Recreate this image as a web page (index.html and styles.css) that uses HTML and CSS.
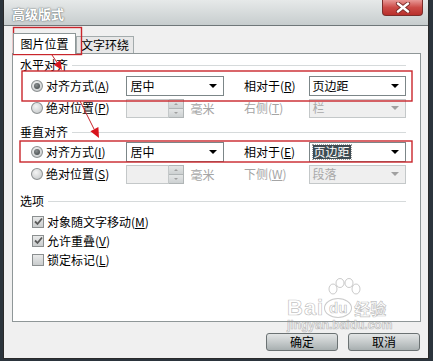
FILE: index.html
```html
<!DOCTYPE html>
<html lang="zh-CN">
<head>
    <meta charset="UTF-8">
    <title>高级版式</title>
    <link rel="stylesheet" href="styles.css">
</head>
<body>
    <div class="janela">
        <div class="barra">
            <span class="titulo">高级版式</span>
            <div class="fechar">
                <svg width="18" height="11" viewBox="0 0 18 11">
                    <path d="M4 1.5 L14 9.5 M14 1.5 L4 9.5" stroke="#7a2a28" stroke-width="4.2" stroke-linecap="round"/>
                    <path d="M4 1.5 L14 9.5 M14 1.5 L4 9.5" stroke="#fff" stroke-width="2.4" stroke-linecap="round"/>
                </svg>
            </div>
        </div>

        <div class="conteudo">
            <div class="abas">
                <div class="aba ativa">图片位置</div>
                <div class="aba">文字环绕</div>
            </div>

            <div class="painel">
                <div class="grupo">水平对齐</div>
                <div class="linha">
                    <span class="radio marcado"></span>
                    <span class="rotulo">对齐方式(<u>A</u>)</span>
                    <div class="caixa"><span>居中</span><i class="seta"></i></div>
                    <span class="rotulo2">相对于(<u>R</u>)</span>
                    <div class="caixa"><span>页边距</span><i class="seta"></i></div>
                </div>
                <div class="linha">
                    <span class="radio"></span>
                    <span class="rotulo">绝对位置(<u>P</u>)</span>
                    <div class="numero">
                        <span class="campo"></span>
                        <span class="giro"><i class="cima"></i><i class="baixo"></i></span>
                        <span class="unidade">毫米</span>
                    </div>
                    <span class="rotulo2 cinza">右侧(<u>T</u>)</span>
                    <div class="caixa off"><span>栏</span><i class="seta"></i></div>
                </div>

                <div class="grupo g2">垂直对齐</div>
                <div class="linha l3">
                    <span class="radio marcado"></span>
                    <span class="rotulo">对齐方式(<u>I</u>)</span>
                    <div class="caixa"><span>居中</span><i class="seta"></i></div>
                    <span class="rotulo2">相对于(<u>E</u>)</span>
                    <div class="caixa"><span class="selecionado">页边距</span><i class="seta"></i></div>
                </div>
                <div class="linha">
                    <span class="radio"></span>
                    <span class="rotulo">绝对位置(<u>S</u>)</span>
                    <div class="numero">
                        <span class="campo"></span>
                        <span class="giro"><i class="cima"></i><i class="baixo"></i></span>
                        <span class="unidade">毫米</span>
                    </div>
                    <span class="rotulo2 cinza">下侧(<u>W</u>)</span>
                    <div class="caixa off"><span>段落</span><i class="seta"></i></div>
                </div>

                <div class="grupo g3">选项</div>
                <div class="opcao primeira">
                    <span class="check"><svg width="9" height="9" viewBox="0 0 9 9"><path d="M1 4.5 L3.5 7 L8 1.5" fill="none" stroke="#5a5a5a" stroke-width="1.8"/></svg></span>
                    <span>对象随文字移动(<u>M</u>)</span>
                </div>
                <div class="opcao">
                    <span class="check"><svg width="9" height="9" viewBox="0 0 9 9"><path d="M1 4.5 L3.5 7 L8 1.5" fill="none" stroke="#5a5a5a" stroke-width="1.8"/></svg></span>
                    <span>允许重叠(<u>V</u>)</span>
                </div>
                <div class="opcao">
                    <span class="check"></span>
                    <span>锁定标记(<u>L</u>)</span>
                </div>
            </div>

            <div class="rodape">
                <button class="botao">确定</button>
                <button class="botao">取消</button>
            </div>
        </div>
    </div>

    <div class="marca">
        <svg class="pata" width="34" height="20" viewBox="0 0 34 20">
            <g fill="rgba(255,255,255,0.7)" stroke="rgba(150,150,150,0.5)">
                <ellipse cx="6" cy="11" rx="4" ry="5"/>
                <ellipse cx="13" cy="5" rx="4" ry="4.5"/>
                <ellipse cx="22" cy="5" rx="4" ry="4.5"/>
                <ellipse cx="29" cy="11" rx="4" ry="5"/>
            </g>
        </svg>
        <div class="marca-linha">
            <span class="bai">Bai</span><span class="du">du</span><span class="jy">经验</span>
        </div>
        <div class="url">jingyan.baidu.com</div>
    </div>

    <svg class="anotacao" width="433" height="361" viewBox="0 0 433 361">
        <g fill="none" stroke="#c9252b" stroke-width="1.4">
            <rect x="13.5" y="27.5" width="68" height="27"/>
            <rect x="22" y="71" width="390" height="30"/>
            <rect x="20" y="141" width="392" height="21"/>
            <line x1="52" y1="55" x2="58" y2="64" stroke-width="1"/>
            <line x1="80" y1="101" x2="94" y2="129" stroke-width="1"/>
        </g>
        <g fill="#d8141c">
            <polygon points="62,70 53.7,64.7 60.3,60.3"/>
            <polygon points="99,138 90.4,131.2 98.4,127"/>
        </g>
    </svg>
</body>
</html>
```

FILE: styles.css
```css
* {
    box-sizing: border-box;
}

body {
    margin: 0;
    width: 433px;
    height: 361px;
    overflow: hidden;
    position: relative;
    background-color: #2b343c;
    font-family: "Noto Sans CJK SC", "Liberation Sans", sans-serif;
    font-size: 12px;
    color: #000;
}

u {
    text-decoration: underline;
}

.janela {
    margin-left: 3px;
    width: 426px;
    height: 359px;
    background-color: #f0f0f0;
    border: 1px solid #2a2a2a;
    border-top: none;
}

.barra {
    display: flex;
    justify-content: space-between;
    height: 26px;
    background: linear-gradient(#e6e9e9, #c7cdce);
    border-bottom: 1px solid #6f7779;
}

.titulo {
    padding: 6px 0 0 8px;
    font-size: 13px;
    line-height: 16px;
    font-weight: bold;
    color: #fff;
    text-shadow: 0 0 2px #6c7475, 0 0 1px #6c7475;
}

.fechar {
    display: flex;
    justify-content: center;
    align-items: center;
    width: 41px;
    height: 16px;
    margin-right: 5px;
    background: linear-gradient(#e89896, #cc4b47 50%, #b8302c);
    border: 1px solid #7b2d2a;
    border-top: none;
    border-radius: 0 0 4px 4px;
}

.conteudo {
    padding: 7px 7px 0 8px;
}

.abas {
    display: flex;
    align-items: flex-end;
    height: 20px;
}

.aba {
    display: flex;
    justify-content: center;
    align-items: center;
    width: 58px;
    height: 17px;
    background-color: #e8e8e8;
    border: 1px solid #a3abac;
    border-bottom: none;
    line-height: 14px;
}

.aba.ativa {
    position: relative;
    z-index: 1;
    width: 63px;
    height: 21px;
    margin-left: 1px;
    margin-bottom: -1px;
    background-color: #fff;
    border-color: #8d9697;
}

.painel {
    height: 269px;
    padding: 4px 14px 0 7px;
    background-color: #fff;
    border: 1px solid #8f9798;
}

.grupo {
    display: flex;
    align-items: center;
    gap: 4px;
    height: 14px;
    line-height: 14px;
}

.grupo::after {
    content: "";
    flex: 1;
    border-top: 1px solid #d6dadb;
}

.g2 {
    margin-top: 7px;
}

.g3 {
    margin-top: 10px;
}

.linha {
    display: flex;
    align-items: center;
    height: 20px;
    margin-top: 2px;
    padding-left: 11px;
}

.grupo + .linha {
    margin-top: 4px;
}

.grupo + .l3 {
    margin-top: 3px;
}

.radio {
    width: 12px;
    height: 12px;
    border-radius: 50%;
    border: 1px solid #8d9192;
    background: radial-gradient(circle at 40% 35%, #f4f4f4, #bfc3c4);
    display: flex;
    justify-content: center;
    align-items: center;
}

.radio.marcado::after {
    content: "";
    width: 6px;
    height: 6px;
    border-radius: 50%;
    background: radial-gradient(circle at 40% 35%, #8a8f90, #3b4042);
}

.rotulo {
    width: 81px;
    margin-left: 3px;
    line-height: 14px;
}

.rotulo2 {
    width: 65px;
    margin-left: 20px;
    line-height: 14px;
}

.cinza,
.unidade {
    color: #a5a5a5;
}

.caixa {
    display: flex;
    justify-content: space-between;
    align-items: center;
    width: 98px;
    height: 20px;
    padding: 0 6px 0 3px;
    background-color: #fff;
    border: 1px solid #7c8688;
    line-height: 14px;
}

.seta {
    width: 0;
    height: 0;
    border-left: 4px solid transparent;
    border-right: 4px solid transparent;
    border-top: 4px solid #000;
}

.caixa.off {
    height: 19px;
    background-color: #efefef;
    border-color: #c4c8c9;
    color: #a9a9a9;
}

.caixa.off .seta {
    border-top-color: #a0a0a0;
}

.selecionado {
    padding: 0 1px;
    background-color: #3e4c54;
    color: #fff;
    outline: 1px dotted #a0a0a0;
}

.numero {
    display: flex;
    align-items: center;
    width: 98px;
}

.campo {
    width: 43px;
    height: 19px;
    background-color: #efefef;
    border: 1px solid #c4c8c9;
}

.giro {
    display: flex;
    flex-direction: column;
    width: 15px;
    height: 19px;
    border: 1px solid #b0b5b6;
    border-left: none;
}

.giro i {
    flex: 1;
    display: flex;
    justify-content: center;
    align-items: center;
    background: linear-gradient(#e4e6e6, #cdd1d2);
}

.giro .cima {
    border-bottom: 1px solid #b0b5b6;
}

.giro .cima::after,
.giro .baixo::after {
    content: "";
    border-left: 2px solid transparent;
    border-right: 2px solid transparent;
}

.giro .cima::after {
    border-bottom: 2px solid #a0a0a0;
}

.giro .baixo::after {
    border-top: 2px solid #a0a0a0;
}

.unidade {
    margin-left: 6px;
}

.opcao {
    display: flex;
    align-items: center;
    gap: 3px;
    height: 19px;
    padding-left: 12px;
    line-height: 14px;
}

.opcao.primeira {
    margin-top: 4px;
}

.check {
    display: flex;
    justify-content: center;
    align-items: center;
    width: 12px;
    height: 12px;
    border: 1px solid #8b8f90;
    background: linear-gradient(#e9eaea, #c9cccd);
}

.rodape {
    display: flex;
    justify-content: flex-end;
    gap: 10px;
    margin-top: 11px;
    padding-right: 1px;
}

.botao {
    width: 72px;
    height: 18px;
    padding: 0;
    font: inherit;
    line-height: 14px;
    color: #000;
    background: linear-gradient(#e2e5e5, #c3c8c9 55%, #a8afb0);
    border: 1px solid #6b7273;
    border-radius: 3px;
}

.marca {
    position: absolute;
    left: 287px;
    top: 278px;
    width: 116px;
    pointer-events: none;
    color: rgba(255, 255, 255, 0.55);
    -webkit-text-stroke: 0.7px rgba(140, 140, 140, 0.55);
    font-family: "Liberation Sans", sans-serif;
}

.pata {
    display: block;
    margin-left: 40px;
}

.marca-linha {
    display: flex;
    align-items: center;
    height: 20px;
}

.bai {
    font-size: 22px;
    line-height: 20px;
    font-weight: bold;
    letter-spacing: 1px;
}

.du {
    display: flex;
    justify-content: center;
    align-items: center;
    width: 28px;
    height: 20px;
    border-radius: 50%;
    border: 1px solid rgba(150, 150, 150, 0.5);
    background-color: rgba(255, 255, 255, 0.4);
    font-size: 15px;
    line-height: 16px;
    font-weight: bold;
}

.jy {
    margin-left: 2px;
    font-family: "Noto Sans CJK SC", sans-serif;
    font-size: 16px;
    line-height: 20px;
    font-weight: bold;
}

.url {
    margin-top: 1px;
    font-size: 12px;
    font-weight: bold;
    line-height: 12px;
}

.anotacao {
    position: absolute;
    left: 0;
    top: 0;
    pointer-events: none;
}
```
